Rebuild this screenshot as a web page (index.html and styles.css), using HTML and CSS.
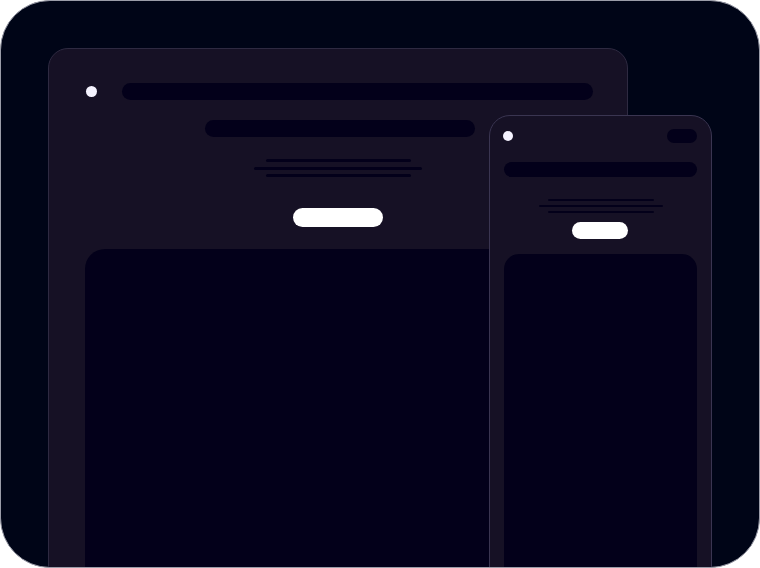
FILE: index.html
```html
<!DOCTYPE html>
<html lang="en">
<head>
<meta charset="utf-8">
<title>Responsive preview</title>
<link rel="stylesheet" href="styles.css">
</head>
<body>
<div class="frame">
  <div class="desktop">
    <div class="d-top">
      <span class="d-dot"></span>
      <span class="d-bar"></span>
    </div>
    <div class="d-title"></div>
    <div class="d-lines">
      <span class="d-line short"></span>
      <span class="d-line long"></span>
      <span class="d-line short"></span>
    </div>
    <div class="d-btn"></div>
    <div class="d-content"></div>
  </div>
  <div class="phone">
    <div class="p-top">
      <span class="p-dot"></span>
      <span class="p-pill"></span>
    </div>
    <div class="p-bar"></div>
    <div class="p-lines">
      <span class="p-line short"></span>
      <span class="p-line long"></span>
      <span class="p-line short"></span>
    </div>
    <div class="p-btn"></div>
    <div class="p-content"></div>
  </div>
</div>
</body>
</html>
```
FILE: styles.css
```css
* { box-sizing: border-box; }
html, body { margin: 0; padding: 0; background: #ffffff; }
body { font-family: "Liberation Sans", Arial, sans-serif; }

.frame {
  position: relative;
  width: 760px;
  height: 568px;
  border: 1px solid #9a9ca8;
  border-radius: 50px;
  background: #000517;
  overflow: hidden;
  padding: 47px 0 0 47px;
}

/* desktop window */
.desktop {
  width: 580px;
  height: 600px;
  background: #161125;
  border: 1px solid #2e2a41;
  border-radius: 20px;
  padding: 34px 34px 0 37px;
  display: flex;
  flex-direction: column;
  align-items: center;
}
.d-top {
  align-self: stretch;
  display: flex;
  align-items: center;
  height: 17px;
  gap: 25px;
}
.d-dot {
  width: 11px;
  height: 11px;
  border-radius: 50%;
  background: #f5f3ff;
  flex: none;
}
.d-bar {
  flex: 1;
  height: 17px;
  border-radius: 9px;
  background: #03001a;
}
.d-title {
  width: 270px;
  height: 17px;
  border-radius: 9px;
  background: #03001a;
  margin-top: 20px;
}
.d-lines {
  margin: 22px 0 0 -3px;
  display: flex;
  flex-direction: column;
  align-items: center;
  gap: 4.5px;
}
.d-line {
  height: 3px;
  border-radius: 2px;
  background: #03001a;
}
.d-line.short { width: 145px; }
.d-line.long { width: 168px; }
.d-btn {
  width: 90px;
  height: 19px;
  border-radius: 10px;
  background: #ffffff;
  margin: 31px 0 0 -3px;
}
.d-content {
  align-self: stretch;
  margin: 22px 0 0 -1px;
  flex: 1;
  border-radius: 20px 20px 0 0;
  background: #03001a;
}

/* phone window */
.phone {
  position: absolute;
  left: 488px;
  top: 114px;
  width: 223px;
  height: 500px;
  background: #161125;
  border: 1px solid #3a3551;
  border-radius: 21px;
  padding: 13px 14px 0 14px;
  display: flex;
  flex-direction: column;
  align-items: center;
}
.p-top {
  align-self: stretch;
  height: 14px;
  display: flex;
  align-items: center;
  justify-content: space-between;
}
.p-dot {
  width: 10px;
  height: 10px;
  border-radius: 50%;
  background: #f5f3ff;
  margin-left: -1px;
}
.p-pill {
  width: 30px;
  height: 14px;
  border-radius: 7px;
  background: #03001a;
}
.p-bar {
  align-self: stretch;
  height: 15px;
  border-radius: 8px;
  background: #03001a;
  margin-top: 19px;
}
.p-lines {
  margin-top: 22px;
  display: flex;
  flex-direction: column;
  align-items: center;
  gap: 4px;
}
.p-line {
  height: 2px;
  border-radius: 1px;
  background: #03001a;
}
.p-line.short { width: 106px; }
.p-line.long { width: 124px; }
.p-btn {
  width: 56px;
  height: 17px;
  border-radius: 9px;
  background: #ffffff;
  margin: 9px 0 0 -1px;
}
.p-content {
  align-self: stretch;
  flex: 1;
  margin-top: 15px;
  border-radius: 15px 15px 0 0;
  background: #03001a;
}
```
